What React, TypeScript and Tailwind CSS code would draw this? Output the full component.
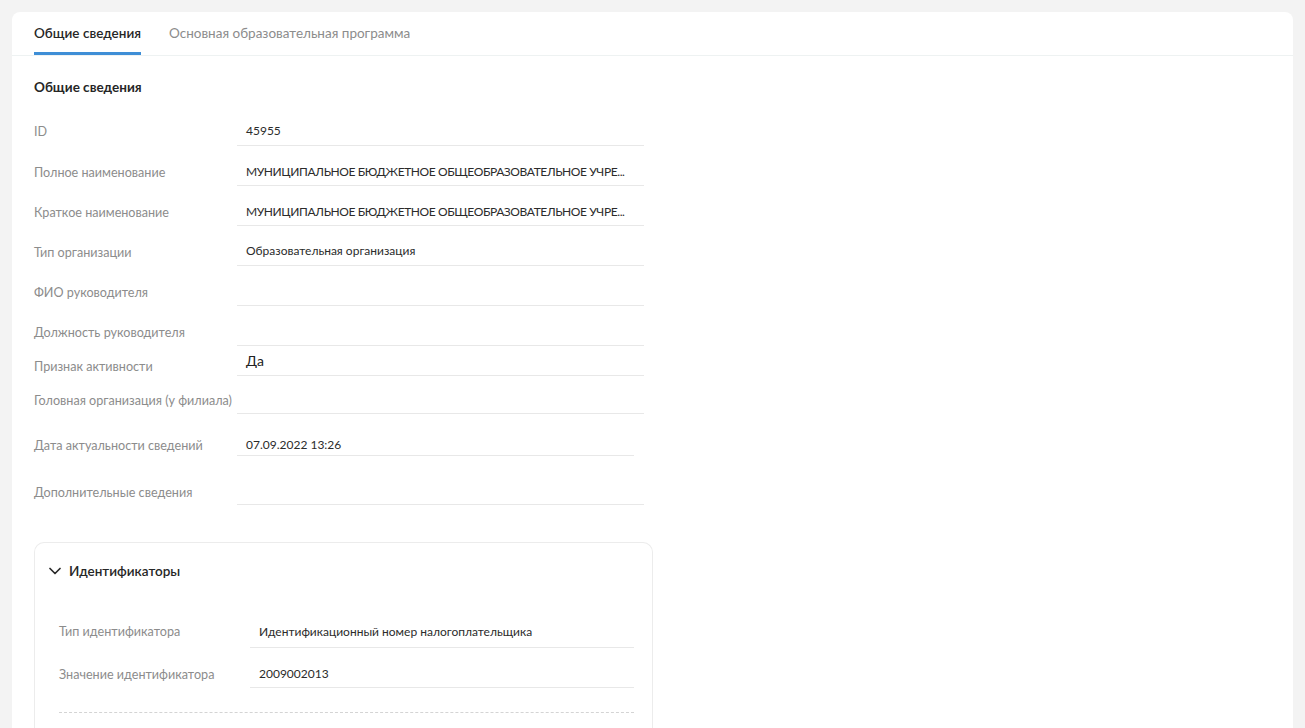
type Field = {
  label: string;
  value?: string;
  row: string;
  labelPad: string;
  valuePad: string;
  line?: string;
  big?: boolean;
  caps?: boolean;
};

const fields: Field[] = [
  { label: "ID", value: "45955", row: "h-[40px]", labelPad: "pb-[5px]", valuePad: "pb-[5px]" },
  {
    label: "Полное наименование",
    value: "МУНИЦИПАЛЬНОЕ БЮДЖЕТНОЕ ОБЩЕОБРАЗОВАТЕЛЬНОЕ УЧРЕ...",
    row: "h-[40px]",
    labelPad: "pb-[4px]",
    valuePad: "pb-[4px]",
    caps: true,
  },
  {
    label: "Краткое наименование",
    value: "МУНИЦИПАЛЬНОЕ БЮДЖЕТНОЕ ОБЩЕОБРАЗОВАТЕЛЬНОЕ УЧРЕ...",
    row: "h-[40px]",
    labelPad: "pb-[4px]",
    valuePad: "pb-[4px]",
    caps: true,
  },
  { label: "Тип организации", value: "Образовательная организация", row: "h-[40px]", labelPad: "pb-[4px]", valuePad: "pb-[5px]" },
  { label: "ФИО руководителя", row: "h-[40px]", labelPad: "pb-[4px]", valuePad: "pb-[4px]" },
  { label: "Должность руководителя", row: "h-[40px]", labelPad: "pb-[4px]", valuePad: "pb-[4px]" },
  { label: "Признак активности", value: "Да", row: "h-[30px]", labelPad: "pb-0", valuePad: "pb-[4px]", big: true },
  { label: "Головная организация (у филиала)", row: "h-[38px]", labelPad: "pb-[4px]", valuePad: "pb-[4px]" },
  { label: "Дата актуальности сведений", value: "07.09.2022 13:26", row: "h-[42px]", labelPad: "pb-[1px]", valuePad: "pb-[1px]", line: "mr-[10px]" },
  { label: "Дополнительные сведения", row: "h-[49px]", labelPad: "pb-[3px]", valuePad: "pb-[3px]" },
];

function FieldRow({ f }: { f: Field }) {
  const valueText = f.big
    ? "text-[14px] leading-[20px] text-[#222]"
    : f.caps
      ? "text-[12px] leading-[18px] tracking-[-0.4px] text-[#2b2b2b]"
      : "text-[12px] leading-[18px] text-[#2b2b2b]";
  return (
    <div className={`grid grid-cols-[203px_407px] ${f.row}`}>
      <div className={`flex items-end text-[12.6px] leading-[18px] text-[#8c8c8c] whitespace-nowrap ${f.labelPad}`}>
        {f.label}
      </div>
      <div className={`flex items-end min-w-0 border-b border-[#e8e8e8] pl-[9px] ${f.valuePad} ${f.line ?? ""}`}>
        <span className={`block whitespace-nowrap ${valueText}`}>{f.value ?? ""}</span>
      </div>
    </div>
  );
}

function Chevron() {
  return (
    <svg width="12" height="8" viewBox="0 0 12 8" fill="none" className="shrink-0">
      <path d="M1 1.5 6 6.5 11 1.5" stroke="#2a2a2a" strokeWidth="1.7" strokeLinecap="round" strokeLinejoin="round" />
    </svg>
  );
}

export default function App() {
  return (
    <div className="min-h-[728px] bg-[#f3f3f3] p-[12px] pb-0 font-['Lato','Noto_Sans',sans-serif]">
      <div className="min-h-[716px] rounded-t-[8px] bg-white">
        {/* Tabs */}
        <div className="flex gap-[28px] border-b border-[#eef2f2] px-[22px]">
          <div className="border-b-[3px] border-[#3e8ed6] pt-[12px] pb-[10px] text-[13.5px] font-semibold leading-[18px] text-[#262626]">
            Общие сведения
          </div>
          <div className="pt-[12px] pb-[10px] text-[13.5px] leading-[18px] text-[#8c8c8c]">
            Основная образовательная программа
          </div>
        </div>

        {/* Content */}
        <div className="px-[22px]">
          <h2 className="pt-[22px] text-[13.5px] font-bold leading-[18px] text-[#262626]">Общие сведения</h2>

          <div className="mt-[10px]">
            {fields.map((f) => (
              <FieldRow key={f.label} f={f} />
            ))}
          </div>

          {/* Identifiers */}
          <div className="mt-[37px] w-[619px] rounded-t-[10px] border border-b-0 border-[#ececec] pr-[21px] pb-[20px]">
            <div className="flex items-center gap-[8px] pl-[14px] pt-[19px] text-[13.5px] font-semibold leading-[18px] text-[#262626]">
              <Chevron />
              Идентификаторы
            </div>

            <div className="mt-[23px] pl-[24px]">
              <div className="grid h-[45px] grid-cols-[191px_384px]">
                <div className="flex items-end pb-[7px] text-[12.6px] leading-[18px] text-[#8c8c8c]">Тип идентификатора</div>
                <div className="flex items-end border-b border-[#e8e8e8] pl-[9px] pb-[6px] text-[12px] leading-[18px] text-[#2b2b2b]">
                  Идентификационный номер налогоплательщика
                </div>
              </div>
              <div className="grid h-[40px] grid-cols-[191px_384px]">
                <div className="flex items-end pb-[4px] text-[12.6px] leading-[18px] text-[#8c8c8c]">Значение идентификатора</div>
                <div className="flex items-end border-b border-[#e8e8e8] pl-[9px] pb-[4px] text-[12px] leading-[18px] text-[#2b2b2b]">
                  2009002013
                </div>
              </div>
              <div className="mt-[24px] w-[575px] border-t border-dashed border-[#d4d4d4]" />
            </div>
          </div>
        </div>
      </div>
    </div>
  );
}
